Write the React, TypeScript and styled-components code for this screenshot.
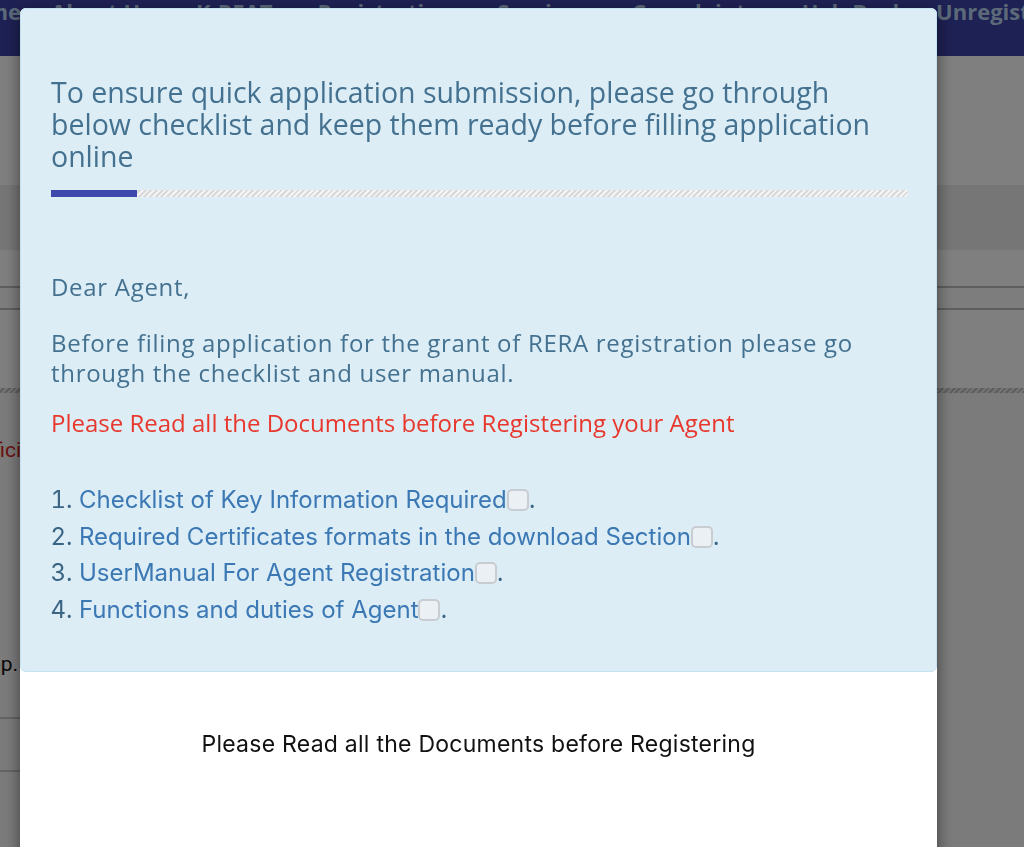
import React from 'react';
import styled, { createGlobalStyle } from 'styled-components';

const GlobalStyle = createGlobalStyle`
  html, body {
    margin: 0;
    padding: 0;
    background: #ffffff;
    overflow: hidden;
  }
  body {
    font-family: 'Open Sans', 'Noto Sans', sans-serif;
  }
`;

const navItems = [
  { label: 'Home', caret: false },
  { label: 'About Us', caret: true },
  { label: 'K-REAT', caret: true },
  { label: 'Registration', caret: true },
  { label: 'Services', caret: true },
  { label: 'Complaints', caret: true },
  { label: 'HelpDesk', caret: false },
  { label: 'Unregistered Projects', caret: false },
];

const checklist = [
  'Checklist of Key Information Required',
  'Required Certificates formats in the download Section',
  'UserManual For Agent Registration',
  'Functions and duties of Agent',
];

export default function App() {
  return (
    <>
      <GlobalStyle />
      <Page>
        <NavBar>
          <NavList>
            {navItems.map((item) => (
              <NavItem key={item.label}>
                {item.label}
                {item.caret && <Caret>▾</Caret>}
              </NavItem>
            ))}
          </NavList>
        </NavBar>
        <Hero />
        <Band />
        <Tabs>
          <TabRow />
        </Tabs>
        <Hatch />
        <FormArea>
          <EdgeText $color="#d9201a" $width={21}>
            <span>Documents must be attested by the offici</span>
          </EdgeText>
          <EdgeText $color="#111" $width={18} $top={190}>
            <span>Upload photograph as per the sample given in step.</span>
          </EdgeText>
          <TableRow />
          <TableRow />
        </FormArea>
      </Page>

      <Backdrop />

      <Modal>
        <InfoPanel>
          <Heading>
            To ensure quick application submission, please go through below checklist and keep
            them ready before filling application online
          </Heading>
          <Progress>
            <ProgressFill />
          </Progress>
          <Greeting>Dear Agent,</Greeting>
          <Paragraph>
            Before filing application for the grant of RERA registration please go through the
            checklist and user manual.
          </Paragraph>
          <Warning>Please Read all the Documents before Registering your Agent</Warning>
          <Checklist>
            {checklist.map((text) => (
              <CheckItem key={text}>
                <a href="#">{text}</a>
                <Tick />.
              </CheckItem>
            ))}
          </Checklist>
        </InfoPanel>
        <Footer>Please Read all the Documents before Registering</Footer>
      </Modal>
    </>
  );
}

const Page = styled.div`
  display: flex;
  flex-direction: column;
  min-height: 100vh;
  background: #fff;
`;

const NavBar = styled.nav`
  height: 56px;
  background: #3c42a6;
  overflow: hidden;
`;

const NavList = styled.ul`
  display: flex;
  gap: 30px;
  margin: -2px 0 0 -44px;
  padding: 0;
  list-style: none;
  white-space: nowrap;
`;

const NavItem = styled.li`
  font-family: 'Open Sans', 'Noto Sans', sans-serif;
  font-weight: 700;
  font-size: 22px;
  line-height: 26px;
  color: #b8d2f2;
`;

const Caret = styled.span`
  margin-left: 8px;
  font-size: 14px;
`;

const Hero = styled.div`
  height: 129px;
  background: #fff;
`;

const Band = styled.div`
  height: 65px;
  background: #ececec;
`;

const Tabs = styled.div`
  padding-top: 36px;
`;

const TabRow = styled.div`
  height: 20px;
  border-top: 2px solid #bdbdbd;
  border-bottom: 2px solid #bdbdbd;
  background: #fafafa;
`;

const Hatch = styled.div`
  margin-top: 78px;
  height: 5px;
  background: repeating-linear-gradient(135deg, #e6e6e6 0 2px, #bdbdbd 2px 4px);
`;

const FormArea = styled.div`
  flex: 1;
  padding: 45px 0 0 0;
  background: #f6f6f6;
`;

const EdgeText = styled.p<{ $color: string; $width: number; $top?: number }>`
  display: flex;
  justify-content: flex-end;
  width: ${(p) => p.$width}px;
  margin: ${(p) => p.$top ?? 0}px 0 0;
  white-space: nowrap;
  font-family: 'Roboto', 'Liberation Sans', sans-serif;
  font-size: 21px;
  color: ${(p) => p.$color};
`;

const TableRow = styled.div`
  width: 480px;
  height: 51px;
  border-top: 2px solid #c9c9c9;

  &:first-of-type {
    margin-top: 41px;
  }
`;

const Backdrop = styled.div`
  position: fixed;
  inset: 0;
  background: rgba(0, 0, 0, 0.5);
`;

const Modal = styled.div`
  position: fixed;
  top: 8px;
  left: 20px;
  width: 917px;
  height: 900px;
  background: #fff;
  border-radius: 6px;
  box-shadow: 0 5px 15px rgba(0, 0, 0, 0.5);
`;

const InfoPanel = styled.section`
  padding: 67px 28px 43px 30px;
  background: #dcedf6;
  border: 1px solid #c4e3ef;
  border-radius: 6px;
  color: #43718f;
`;

const Heading = styled.h2`
  max-width: 840px;
  margin: 0;
  font-family: 'Open Sans', 'Noto Sans', sans-serif;
  font-weight: 400;
  font-size: 28.5px;
  line-height: 32px;
  letter-spacing: 0;
`;

const Progress = styled.div`
  margin: 18px 0 0;
  height: 7px;
  background: repeating-linear-gradient(135deg, #f4f4f4 0 2px, #d9d9d9 2px 4px);
`;

const ProgressFill = styled.div`
  width: 86px;
  height: 100%;
  background: #3f48ac;
`;

const Greeting = styled.p`
  margin: 75px 0 0;
  font-family: 'Open Sans', 'Noto Sans', sans-serif;
  font-size: 24px;
  line-height: 30px;
  letter-spacing: 0.7px;
`;

const Paragraph = styled(Greeting)`
  margin-top: 26px;
  letter-spacing: 0.7px;
`;

const Warning = styled(Greeting)`
  margin-top: 20px;
  letter-spacing: 0;
  color: #e8372c;
`;

const Checklist = styled.ol`
  margin: 44px 0 0;
  padding: 0 0 0 28px;
  font-family: 'Inter', 'Roboto', sans-serif;
  font-size: 24px;
  line-height: 36.5px;
  color: #3a6584;
`;

const CheckItem = styled.li`
  a {
    color: #3b78b4;
    text-decoration: none;
  }
`;

const Tick = styled.span`
  display: inline-block;
  width: 22px;
  height: 22px;
  box-sizing: border-box;
  border: 2px solid #c9cdd1;
  border-radius: 5px;
  background: #eaf0f4;
  vertical-align: -3px;
`;

const Footer = styled.div`
  padding: 58px 0 0;
  text-align: center;
  font-family: 'Inter', 'Roboto', sans-serif;
  font-size: 23px;
  letter-spacing: 0.25px;
  color: #111;
`;
